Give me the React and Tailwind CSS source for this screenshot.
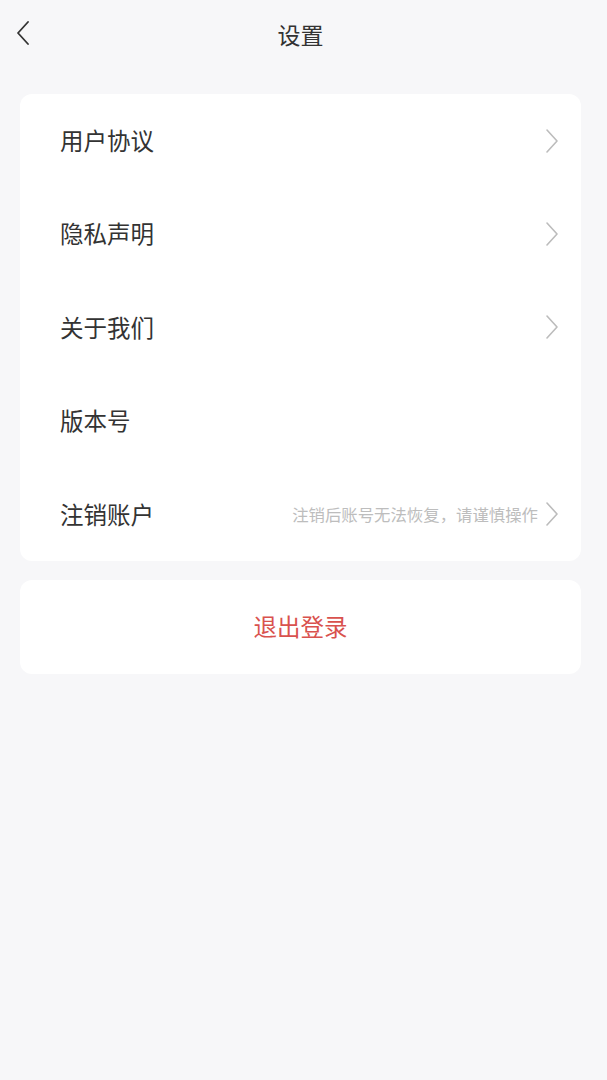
const Chevron = () => (
  <svg width="14" height="26" viewBox="0 0 14 26" fill="none" className="shrink-0">
    <path d="M2 2 L12 13 L2 24" stroke="#bcbcbc" strokeWidth="1.6" strokeLinecap="round" strokeLinejoin="round" />
  </svg>
);

const rows = [
  { label: '用户协议', arrow: true },
  { label: '隐私声明', arrow: true },
  { label: '关于我们', arrow: true },
  { label: '版本号', arrow: false },
  { label: '注销账户', arrow: true, note: '注销后账号无法恢复，请谨慎操作' },
];

export default function App() {
  return (
    <div
      className="min-h-[1080px] w-full bg-[#f7f7f9] text-[#333333]"
      style={{ fontFamily: '"Noto Sans CJK SC", "Noto Sans", sans-serif' }}
    >
      <div className="relative flex h-[66px] w-[601px] items-center justify-center">
        <button className="absolute left-[12px] top-[17px] p-1">
          <svg width="14" height="24" viewBox="0 0 14 24" fill="none">
            <path d="M12 1 L2 12 L12 23" stroke="#333" strokeWidth="1.8" strokeLinecap="round" strokeLinejoin="round" />
          </svg>
        </button>
        <h1 className="pt-[3px] text-[23px] font-normal leading-none">设置</h1>
      </div>

      <div className="ml-[20px] mt-[28px] w-[561px] rounded-[12px] bg-white">
        {rows.map((r) => (
          <div key={r.label} className="flex h-[93.4px] items-center pl-[40px] pr-[22px]">
            <span className="flex-1 text-[23.5px] leading-none">{r.label}</span>
            {r.note && <span className="mr-[7px] text-[16.4px] leading-none text-[#bdbdbd]">{r.note}</span>}
            {r.arrow && <Chevron />}
          </div>
        ))}
      </div>

      <div className="ml-[20px] mt-[19px] flex h-[94px] w-[561px] items-center justify-center rounded-[12px] bg-white pb-[1px]">
        <span className="text-[23.5px] leading-none text-[#d9524e]">退出登录</span>
      </div>
    </div>
  );
}
